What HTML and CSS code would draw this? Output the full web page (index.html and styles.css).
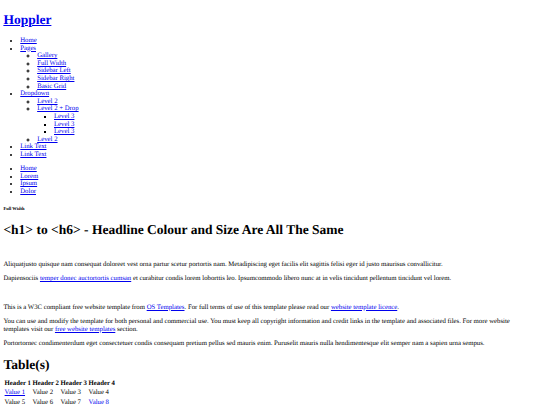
FILE: index.html
```html
<!DOCTYPE html>
<html lang="en">
<head>
<meta charset="utf-8">
<title>Full Width | Hoppler</title>
<link rel="stylesheet" href="styles.css">
</head>
<body>
<div class="header">
  <h1 class="heading"><a href="#">Hoppler</a></h1>
  <ul class="menu">
    <li><a href="#">Home</a></li>
    <li><a href="#">Pages</a>
      <ul class="sub">
        <li><a href="#">Gallery</a></li>
        <li><a href="#">Full Width</a></li>
        <li><a href="#">Sidebar Left</a></li>
        <li><a href="#">Sidebar Right</a></li>
        <li><a href="#">Basic Grid</a></li>
      </ul>
    </li>
    <li><a href="#">Dropdown</a>
      <ul class="sub">
        <li><a href="#">Level 2</a></li>
        <li><a href="#">Level 2 + Drop</a>
          <ul class="sub">
            <li><a href="#">Level 3</a></li>
            <li><a href="#">Level 3</a></li>
            <li><a href="#">Level 3</a></li>
          </ul>
        </li>
        <li><a href="#">Level 2</a></li>
      </ul>
    </li>
    <li><a href="#">Link Text</a></li>
    <li><a href="#">Link Text</a></li>
  </ul>
  <ul class="menu">
    <li><a href="#">Home</a></li>
    <li><a href="#">Lorem</a></li>
    <li><a href="#">Ipsum</a></li>
    <li><a href="#">Dolor</a></li>
  </ul>
</div>
<div class="content">
  <h6 class="crumb">Full Width</h6>
  <h1 class="heading">&lt;h1&gt; to &lt;h6&gt; - Headline Colour and Size Are All The Same</h1>
  <div class="imgline"></div>
  <p>Aliquatjusto quisque nam consequat doloreet vest orna partur scetur portortis nam. Metadipiscing eget facilis elit sagittis felisi eger id justo maurisus convallicitur.</p>
  <p>Dapiensociis <a href="#">temper donec auctortortis cumsan</a> et curabitur condis lorem loborttis leo. Ipsumcommodo libero nunc at in velis tincidunt pellentum tincidunt vel lorem.</p>
  <div class="imgline"></div>
  <p>This is a W3C compliant free website template from <a href="#">OS Templates</a>. For full terms of use of this template please read our <a href="#">website template licence</a>.</p>
  <p>You can use and modify the template for both personal and commercial use. You must keep all copyright information and credit links in the template and associated files. For more website templates visit our <a href="#">free website templates</a> section.</p>
  <p>Portortornec condimenterdum eget consectetuer condis consequam pretium pellus sed mauris enim. Puruselit mauris nulla hendimentesque elit semper nam a sapien urna sempus.</p>
  <h1 class="heading tight">Table(s)</h1>
  <table class="data">
    <thead>
      <tr><th>Header 1</th><th>Header 2</th><th>Header 3</th><th>Header 4</th></tr>
    </thead>
    <tbody>
      <tr><td><a href="#">Value 1</a></td><td>Value 2</td><td>Value 3</td><td>Value 4</td></tr>
      <tr><td>Value 5</td><td>Value 6</td><td>Value 7</td><td><a href="#">Value 8</a></td></tr>
      <tr><td>Value 9</td><td>Value 10</td><td>Value 11</td><td>Value 12</td></tr>
    </tbody>
  </table>
</div>
</body>
</html>
```
FILE: styles.css
```css
html {
  background: #fff;
}
body {
  margin: 3.375px 5px 3.375px 3.375px;
  font-family: "Liberation Serif", "Times New Roman", serif;
  font-size: 6.75px;
  line-height: 7.594px;
  color: #000;
  text-rendering: geometricPrecision;
}
a {
  color: #0000ee;
}
.heading {
  font-size: 13.5px;
  line-height: 15.61px;
  margin: 9.045px 0;
  font-weight: bold;
}
.heading.tight {
  margin-bottom: 7.05px;
}
.menu {
  margin: 6.75px 0;
  padding-left: 16.875px;
}
.sub {
  margin: 0;
  padding-left: 16.875px;
  list-style-type: circle;
}
.sub .sub {
  list-style-type: square;
}
.crumb {
  font-size: 4.523px;
  line-height: 5.0625px;
  margin: 10.54px 0;
  font-weight: bold;
}
.imgline {
  height: 7.594px;
}
p {
  margin: 6.75px 0;
}
.data {
  border-spacing: 0;
  margin-left: 0.42px;
}
.data th,
.data td {
  padding: 0.84px;
}
```
